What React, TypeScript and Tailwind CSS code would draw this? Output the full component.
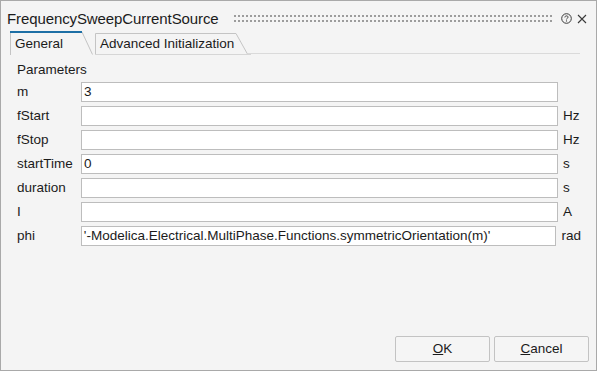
import React from 'react'

const rows = [
  { name: 'm', value: '3', unit: '' },
  { name: 'fStart', value: '', unit: 'Hz' },
  { name: 'fStop', value: '', unit: 'Hz' },
  { name: 'startTime', value: '0', unit: 's' },
  { name: 'duration', value: '', unit: 's' },
  { name: 'I', value: '', unit: 'A' },
  { name: 'phi', value: "'-Modelica.Electrical.MultiPhase.Functions.symmetricOrientation(m)'", unit: 'rad' },
]

function Grip() {
  return (
    <svg className="flex-1 h-[8px]" preserveAspectRatio="none">
      <defs>
        <pattern id="grip" width="4" height="5" patternUnits="userSpaceOnUse">
          <rect x="0" y="0" width="2" height="2" fill="#9c9c9c" />
        </pattern>
      </defs>
      <rect x="0" y="0" width="100%" height="7" fill="url(#grip)" />
    </svg>
  )
}

export default function App() {
  return (
    <div className="w-[597px] h-[371px] border border-[#a9a9a9] bg-[#f4f4f4] flex flex-col text-[#1b1b1b] font-['Liberation_Sans',Arial,sans-serif]">
      {/* title bar */}
      <div className="h-[30px] pt-[5px] flex items-center pl-[6px] pr-[9px]">
        <span className="text-[15px] leading-[18px] tracking-[-0.1px]">FrequencySweepCurrentSource</span>
        <div className="flex-1 flex items-center ml-[15px] mr-[8px] pt-[1px]">
          <Grip />
        </div>
        <svg width="11" height="11" viewBox="0 0 11 11" className="mr-[5px]">
          <circle cx="5.5" cy="5.5" r="4.8" fill="none" stroke="#3a3a3a" strokeWidth="1" />
          <path d="M3.9 4.4 C3.9 3.4 4.6 2.9 5.5 2.9 C6.4 2.9 7.1 3.4 7.1 4.2 C7.1 5.1 5.5 5.3 5.5 6.4" fill="none" stroke="#3a3a3a" strokeWidth="1" />
          <circle cx="5.5" cy="7.9" r="0.6" fill="#3a3a3a" />
        </svg>
        <svg width="10" height="10" viewBox="0 0 10 10">
          <path d="M1 1 L9 9 M9 1 L1 9" stroke="#3a3a3a" strokeWidth="1.1" />
        </svg>
      </div>

      {/* tabs */}
      <div className="h-[24px] flex items-end pl-[9px]">
        <div className="relative w-[83px] h-[24px] text-[13.5px]">
          <svg className="absolute inset-0" width="83" height="24">
            <path d="M0.5 24 L0.5 1 L72 1 L82.5 23.5" fill="none" stroke="#c4c4c4" strokeWidth="1" />
            <path d="M0 1 L72 1" stroke="#1d6fa5" strokeWidth="2" />
          </svg>
          <span className="absolute left-[5px] top-[5px] leading-[16px]">General</span>
        </div>
        <div className="relative w-[156px] h-[22px] ml-[2px] text-[13.5px]">
          <svg className="absolute inset-0" width="156" height="22">
            <path d="M0.5 22 L0.5 0.5 L141 0.5 L153 22" fill="none" stroke="#c4c4c4" strokeWidth="1" />
            <path d="M0 21.5 L156 21.5" stroke="#d6d6d6" strokeWidth="1" />
          </svg>
          <span className="absolute left-[5px] top-[3px] leading-[16px]">Advanced Initialization</span>
        </div>
        <div className="flex-1 h-[24px] border-b border-[#dadada] mr-[16px] -ml-[3px] mb-[1px]"></div>
      </div>

      {/* parameters */}
      <div className="pl-[16px] pr-[15px] pt-[7px] text-[13.5px] flex flex-col gap-[4px]">
        <div className="leading-[16px]">Parameters</div>
        {rows.map((r) => (
          <div key={r.name} className="flex items-center h-[20px]">
            <div className="w-[64px] leading-[16px]">{r.name}</div>
            <div className="w-[477px] h-[20px] bg-white border border-[#bdbdbd] pl-[2px] flex items-center leading-[16px] whitespace-nowrap overflow-hidden">
              {r.value}
            </div>
            <div className="ml-[5px] leading-[16px]">{r.unit}</div>
          </div>
        ))}
      </div>

      {/* buttons */}
      <div className="mt-auto flex justify-end gap-[4px] pr-[7px] pb-[8px] text-[13.5px]">
        <button className="w-[95px] h-[26px] border border-[#c3c3c3] rounded-[2px] bg-[#f5f5f5] flex items-center justify-center">
          <span><span className="underline">O</span>K</span>
        </button>
        <button className="w-[95px] h-[26px] border border-[#c3c3c3] rounded-[2px] bg-[#f5f5f5] flex items-center justify-center">
          <span><span className="underline">C</span>ancel</span>
        </button>
      </div>
    </div>
  )
}
